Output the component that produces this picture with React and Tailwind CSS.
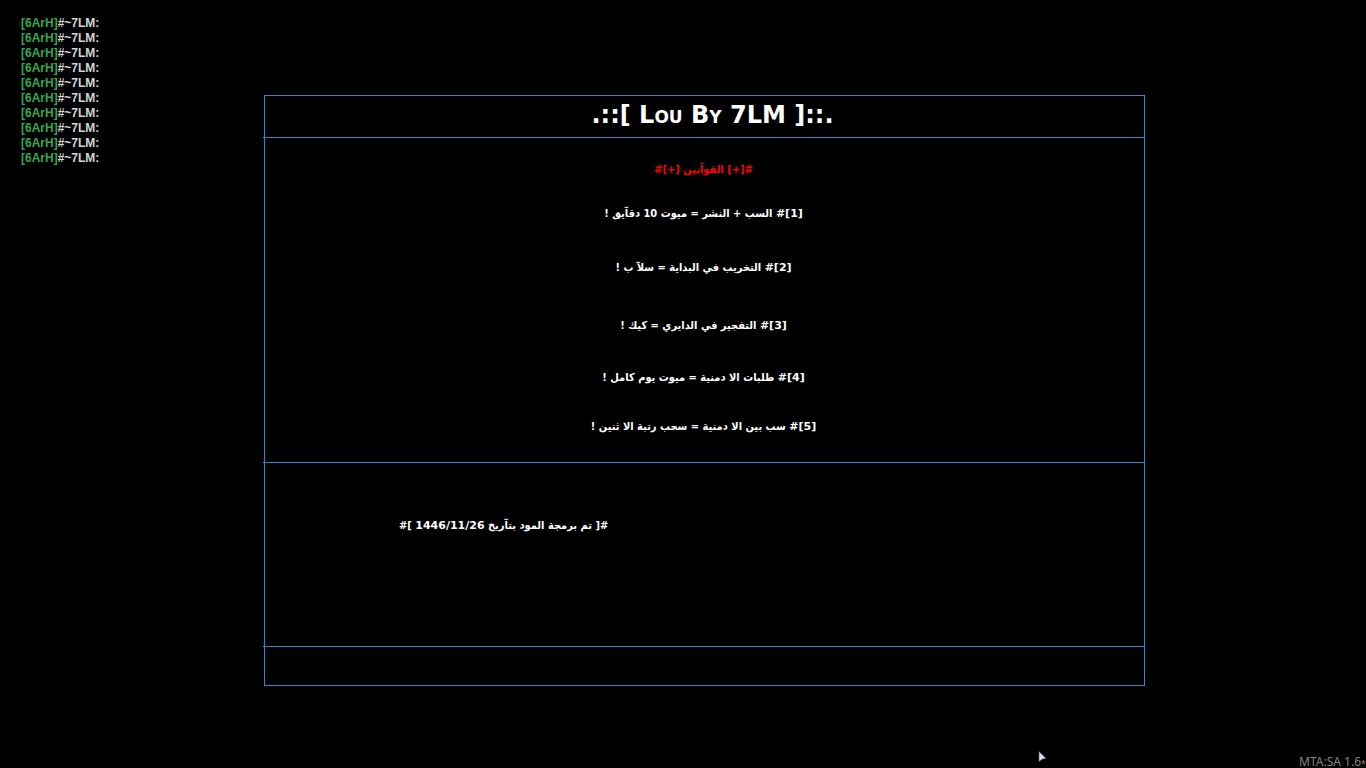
const messages = Array.from({ length: 10 }, (_, i) => i);

const rules = [
  { n: 1, text: "السب + النشر = ميوت 10 دقآيق !", gap: "mt-6" },
  { n: 2, text: "التخريب في البداية = سلآ ب !", gap: "mt-[34px]" },
  { n: 3, text: "التفجير في الدايري = كيك !", gap: "mt-[38px]" },
  { n: 4, text: "طلبات الا دمنية = ميوت يوم كامل !", gap: "mt-8" },
  { n: 5, text: "سب بين الا دمنية = سحب رتبة الا ثنين !", gap: "mt-[29px]" },
];

function ChatLog() {
  return (
    <ul className="w-[264px] shrink-0 pt-4 pl-[21px] font-['Liberation_Sans',Arial,sans-serif] text-[12px] leading-[15px] font-bold text-[#d4d4d4]">
      {messages.map((i) => (
        <li key={i} className="whitespace-nowrap">
          <span className="text-[#32a852]">[6ArH]</span>#~7LM:
        </li>
      ))}
    </ul>
  );
}

function Cursor() {
  return (
    <svg className="pointer-events-none absolute bottom-[5px] left-[1038px]" width="9" height="12" viewBox="0 0 9 12" aria-hidden="true">
      <path d="M1 0.5 L8 7.5 L4.6 8 L1 10.5 Z" fill="#dcdcf0" stroke="#55556a" strokeWidth="0.5" />
    </svg>
  );
}

export default function App() {
  return (
    <div className="relative flex min-h-screen bg-black text-white">
      <ChatLog />
      <main className="mt-[95px] mr-[221px] mb-[82px] flex min-w-0 flex-1 flex-col border border-[#3385cc] font-['DejaVu_Sans_Condensed','DejaVu_Sans',sans-serif] text-[11px] leading-5 font-bold">
        <header className="-ml-0.5 flex h-[42px] items-center justify-center border-b border-[#3385cc] pb-1 pl-[18px]">
          <h1 className="font-['DejaVu_Sans',sans-serif] text-[24px] leading-7 font-bold whitespace-pre [font-variant-caps:small-caps]">
            {".::[ Lou By 7LM ]::."}
          </h1>
        </header>
        <section className="-ml-0.5 flex h-[325px] flex-col items-center border-b border-[#3385cc] pt-[22px]">
          <h2 className="text-[#ff0000]">#[+] القوآنين [+]#</h2>
          <ol className="flex flex-col items-center" dir="rtl">
            {rules.map((rule) => (
              <li key={rule.n} className={rule.gap}>
                <bdi dir="ltr" className="font-['DejaVu_Sans',sans-serif]">#[{rule.n}]</bdi> {rule.text}
              </li>
            ))}
          </ol>
        </section>
        <section className="-ml-0.5 flex flex-1 items-start border-b border-[#3385cc] pt-[53px] pl-[136px]">
          <p dir="rtl">
            #[ تم برمجة المود بتآريخ <bdi dir="ltr" className="font-['DejaVu_Sans',sans-serif]">1446/11/26</bdi> ]#
          </p>
        </section>
        <footer className="h-[38px]" />
      </main>
      <p className="absolute right-0 bottom-0 flex items-end font-['Noto_Sans',sans-serif] text-[12px] leading-3 text-[#858585]">
        MTA:SA 1.6<span className="text-[9px] leading-[9px]">*</span>
      </p>
      <Cursor />
    </div>
  );
}
